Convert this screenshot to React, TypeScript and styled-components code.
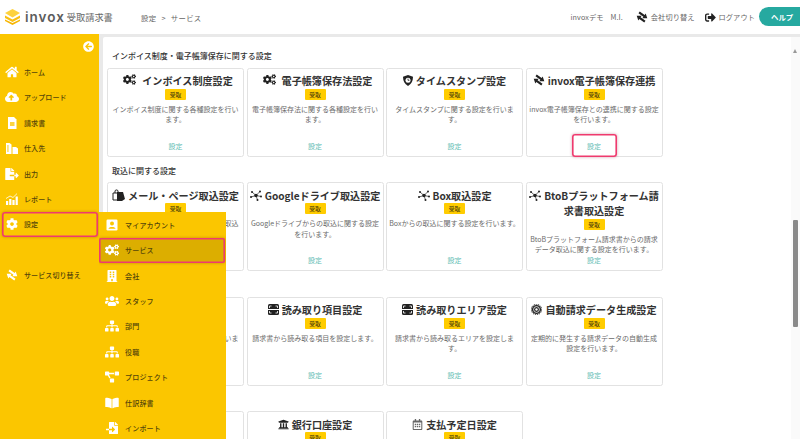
import { FunctionComponent, ReactNode } from 'react';
import styled, { createGlobalStyle } from 'styled-components';
import {
  FaArrowCircleLeft,
  FaBookOpen,
  FaBuilding,
  FaCloudUploadAlt,
  FaCog,
  FaCogs,
  FaFileExport,
  FaFileImport,
  FaHome,
  FaProjectDiagram,
  FaRegCalendarAlt,
  FaSignOutAlt,
  FaSitemap,
  FaUniversity,
  FaUsers,
} from 'react-icons/fa';

const PINK = '#ef3a6e';
const YELLOW = '#fbc600';

const GlobalStyle = createGlobalStyle`
  html, body {
    margin: 0;
    padding: 0;
    background: #fff;
    font-family: "Noto Sans CJK JP", "Noto Sans", sans-serif;
  }
  * {
    box-sizing: border-box;
  }
`;

const Page = styled.div`
  width: 800px;
  height: 439px;
  overflow: hidden;
  display: flex;
  flex-direction: column;
`;

const Header = styled.header`
  height: 34px;
  flex: none;
  display: flex;
  align-items: center;
  background: #fff;
  color: #666;
`;

const Brand = styled.div`
  width: 141px;
  padding-left: 5px;
  display: flex;
  align-items: center;
  gap: 5px;
`;

const BrandName = styled.span`
  font-family: 'Inter', sans-serif;
  font-size: 13.5px;
  font-weight: 600;
  letter-spacing: 1px;
  color: #5c5c5c;
`;

const BrandSub = styled.span`
  font-size: 9.2px;
  font-weight: 400;
  margin-left: -3px;
  color: #666;
`;

const Breadcrumb = styled.div`
  font-size: 7.4px;
  letter-spacing: 0.3px;
  display: flex;
  gap: 5px;
  flex: 1;
`;

const HeaderLink = styled.span<{ $gap?: number }>`
  font-size: 7.2px;
  letter-spacing: 0.1px;
  display: flex;
  align-items: center;
  gap: 3px;
  margin-right: ${(p) => p.$gap ?? 0}px;
  white-space: nowrap;

  svg {
    color: #222;
    font-size: 11px;
  }
`;

const HelpButton = styled.div`
  width: 41px;
  height: 19px;
  margin-top: -1px;
  padding-left: 12px;
  border-radius: 10px 0 0 10px;
  background: #26a9a0;
  color: #fff;
  font-size: 7.4px;
  font-weight: 700;
  line-height: 19px;
`;

const Body = styled.div`
  position: relative;
  flex: 1;
  min-height: 0;
  display: flex;
  background: #e9e9e9;
`;

const Sidebar = styled.nav`
  width: 99px;
  flex: none;
  background: ${YELLOW};
  padding-top: 25.3px;
  position: relative;
`;

const Collapse = styled.div`
  position: absolute;
  top: 7px;
  left: 83px;
  color: #fff;
  font-size: 11px;
  line-height: 0;
`;

const NavItem = styled.div<{ $marked?: boolean; $spaced?: boolean }>`
  height: 25.4px;
  display: flex;
  align-items: center;
  margin: ${(p) => (p.$spaced ? '25.4px 1px 0 2px' : '0 1px 0 2px')};
  padding-left: 3px;
  gap: 5px;
  border-radius: 3px;
  color: #54450a;
  font-size: 7px;
  font-weight: 500;
  letter-spacing: 0.1px;
  box-shadow: ${(p) =>
    p.$marked ? `inset 0 0 0 1.6px ${PINK}, 0 0 3px rgba(120, 60, 0, 0.45)` : 'none'};

  svg {
    color: #fff;
    font-size: 12px;
    width: 14px;
    flex: none;
  }
`;

const Flyout = styled.div`
  position: absolute;
  z-index: 2;
  top: 178.2px;
  left: 99px;
  bottom: 0;
  width: 127px;
  background: ${YELLOW};
  overflow: hidden;
`;

const FlyoutItem = styled.div<{ $marked?: boolean }>`
  height: 25.4px;
  display: flex;
  align-items: center;
  padding-left: 6px;
  gap: 6px;
  margin-right: 1px;
  border-radius: 2px;
  color: #54450a;
  font-size: 7px;
  font-weight: 500;
  letter-spacing: 0.2px;
  background: ${(p) => (p.$marked ? '#dcae00' : 'transparent')};
  box-shadow: ${(p) =>
    p.$marked ? `inset 0 0 0 1.6px ${PINK}, 0 0 3px rgba(120, 60, 0, 0.45)` : 'none'};

  svg {
    color: #fff;
    font-size: 12px;
    width: 14px;
    flex: none;
  }
`;

const Panel = styled.main`
  flex: 1;
  min-width: 0;
  margin: 3px 0 0 4px;
  background: #fff;
  border-radius: 2px 0 0 0;
  display: flex;
  overflow: hidden;
`;

const ScrollArea = styled.div`
  flex: 1;
  min-width: 0;
  padding: 12px 0 0 4px;
  overflow: hidden;
`;

const Section = styled.section`
  margin-bottom: 7px;
`;

const SectionTitle = styled.h2`
  margin: 0 0 4.5px 5px;
  height: 14px;
  line-height: 14px;
  font-size: 8px;
  font-weight: 500;
  color: #333;
`;

const Grid = styled.div`
  display: grid;
  grid-template-columns: repeat(4, 137px);
  grid-auto-rows: 89px;
  column-gap: 2.5px;
`;

const CardBox = styled.article`
  border: 1px solid #e2e2e2;
  border-radius: 2.5px;
  padding: 4.5px 2px 0;
  display: flex;
  flex-direction: column;
  align-items: center;
  text-align: center;
  background: #fff;
`;

const CardTitle = styled.h3`
  flex: none;
  margin: 0;
  min-height: 15.6px;
  font-size: 10.1px;
  line-height: 15.6px;
  font-weight: 700;
  color: #333;

  svg {
    display: inline-block;
    vertical-align: -1px;
    margin-right: 3px;
  }
`;

const Badge = styled.span`
  flex: none;
  width: 21px;
  height: 11px;
  background: #ffcc00;
  color: #54450a;
  font-size: 5.8px;
  font-weight: 500;
  line-height: 11px;
  border-radius: 1px;
`;

const Description = styled.p`
  flex: 0 1 auto;
  min-height: 0;
  margin: 4px 0 0;
  font-size: 7px;
  line-height: 10.4px;
  color: #6b6b6b;
`;

const SettingLink = styled.a<{ $marked?: boolean }>`
  flex: none;
  margin: auto 0 -1px;
  width: 45px;
  height: 23px;
  padding-top: 1px;
  line-height: 23px;
  font-size: 7px;
  color: #5fbdb4;
  border-radius: 3px;
  box-shadow: ${(p) =>
    p.$marked ? `inset 0 0 0 1.6px ${PINK}, 0 0 3px rgba(150, 40, 70, 0.45)` : 'none'};
`;

const ScrollTrack = styled.div`
  width: 9px;
  flex: none;
  background: #fafafa;
  padding-top: 12px;
  position: relative;
`;

const ScrollArrow = styled.div`
  width: 0;
  height: 0;
  margin-left: 2px;
  border-left: 2.5px solid transparent;
  border-right: 2.5px solid transparent;
  border-bottom: 4px solid #999;
`;

const ScrollThumb = styled.div`
  width: 5px;
  height: 107px;
  margin: 167px 0 0 2px;
  background: #8a8a8a;
  border-radius: 1px;
`;

const Logo = () => (
  <svg width="15" height="16" viewBox="0 0 15 16">
    <path d="M0 10.5 7.5 14 15 10.5V12L7.5 16 0 12Z" fill="#f7b500" />
    <path d="M0 6.5 7.5 10.5 15 6.5V9L7.5 13 0 9Z" fill="#f9bf10" />
    <path d="M7.5 0 15 4 7.5 8.5 0 4Z" fill="#fdd23e" />
  </svg>
);

const SwapIcon = ({ color = '#222' }: { color?: string }) => (
  <svg width="12" height="12" viewBox="0 0 12 12" style={{ color }}>
    <g transform="rotate(35 6 6)" fill="currentColor">
      <path d="M1 2.8H7V1L11 3.9 7 6.8V5H1Z" />
      <path d="M11 7H5V5.2L1 8.1 5 11V9.2H11Z" />
    </g>
  </svg>
);

const ShieldIcon = () => (
  <svg width="10" height="11" viewBox="0 0 10 11">
    <path d="M5 0 10 1.8C10 6 8.4 9.2 5 11 1.6 9.2 0 6 0 1.8Z" fill="#222" />
    <circle cx="5" cy="5.2" r="2.5" fill="#fff" />
    <path d="M5 3.6V5.3H6.4" stroke="#222" strokeWidth="0.8" fill="none" />
  </svg>
);

const MailIcon = () => (
  <svg width="13" height="12" viewBox="0 0 13 12">
    <path d="M1 4H9V11H1Z" fill="#fff" stroke="#222" strokeWidth="1" />
    <path d="M3 4V2C3 .6 6 .6 6 2V4" fill="none" stroke="#222" strokeWidth="1" />
    <path d="M5 3H11L13 10 10 12H5Z" fill="#222" />
  </svg>
);

const HubIcon = () => (
  <svg width="12" height="11" viewBox="0 0 12 11">
    <path
      d="M6 5.5 2 2M6 5.5 10 1.5M6 5.5 1 7M6 5.5 11 6.5M6 5.5 7.5 10"
      stroke="#222"
      strokeWidth="0.7"
    />
    <circle cx="6" cy="5.5" r="1.7" fill="#222" />
    <circle cx="2" cy="2" r="1" fill="#222" />
    <circle cx="10" cy="1.5" r="1" fill="#222" />
    <circle cx="1" cy="7" r="1" fill="#222" />
    <circle cx="11" cy="6.5" r="1" fill="#222" />
    <circle cx="7.5" cy="10" r="1" fill="#222" />
  </svg>
);

const ScanIcon = () => (
  <svg width="11" height="11" viewBox="0 0 11 11">
    <rect width="11" height="11" rx="1.5" fill="#222" />
    <path
      d="M1.5 4V2H3.5M7.5 2H9.5V4M1.5 7V9H3.5M7.5 9H9.5V7"
      stroke="#fff"
      strokeWidth="0.8"
      fill="none"
    />
    <rect x="0" y="5" width="11" height="1" fill="#fff" />
  </svg>
);

const RoundGearIcon = () => (
  <svg width="11" height="11" viewBox="0 0 11 11">
    <circle cx="5.5" cy="5.5" r="4.6" fill="#222" />
    <circle cx="5.5" cy="5.5" r="5.2" fill="none" stroke="#222" strokeWidth="1" strokeDasharray="1.2 0.9" />
    <circle cx="5.5" cy="5.5" r="2.9" fill="none" stroke="#fff" strokeWidth="0.8" />
    <circle cx="5.5" cy="5.5" r="1.2" fill="#fff" />
  </svg>
);

const AccountIcon = () => (
  <svg width="12" height="12" viewBox="0 0 12 12">
    <rect width="11" height="11" x="0.5" y="0.5" rx="1.2" fill="#fff" />
    <circle cx="6" cy="4.4" r="2" fill={YELLOW} />
    <path d="M2.5 9.8C2.5 7.4 9.5 7.4 9.5 9.8Z" fill={YELLOW} />
  </svg>
);

const InvoiceIcon = () => (
  <svg width="12" height="12" viewBox="0 0 12 12">
    <path d="M2 0H8L10.5 2.5V12H2Z" fill="#fff" />
    <rect x="4" y="5" width="4.5" height="4" fill={YELLOW} opacity="0.75" />
  </svg>
);

const SupplierIcon = () => (
  <svg width="12" height="11" viewBox="0 0 12 11">
    <path d="M0 0H3.5L5.5 1.5V11H0Z" fill="#fff" />
    <rect x="1.5" y="2" width="0.9" height="7" fill={YELLOW} />
    <path d="M6.5 4H10L12 5.5V11H6.5Z" fill="#fff" />
  </svg>
);

const ReportIcon = () => (
  <svg width="12" height="12" viewBox="0 0 12 12">
    <rect x="0" y="8" width="2.2" height="4" fill="#fff" />
    <rect x="3.2" y="6" width="2.2" height="6" fill="#fff" />
    <rect x="6.4" y="7" width="2.2" height="5" fill="#fff" />
    <rect x="9.6" y="3.5" width="2.2" height="8.5" fill="#fff" />
    <path d="M0 5.5 4 3 7 4.5 11 .6" fill="none" stroke="#fff" strokeWidth="0.8" />
  </svg>
);

interface ICardProps {
  icon?: ReactNode;
  title?: string;
  description?: string;
  marked?: boolean;
}

const Card: FunctionComponent<ICardProps> = (props): JSX.Element => {
  return (
    <CardBox>
      <CardTitle>
        {props.icon}
        {props.title}
      </CardTitle>
      <Badge>受取</Badge>
      <Description>{props.description}</Description>
      <SettingLink $marked={props.marked}>設定</SettingLink>
    </CardBox>
  );
};

const App: FunctionComponent = (): JSX.Element => {
  const cogs = <FaCogs size={13} color="#222" style={{ marginLeft: 5, marginRight: 6 }} />;

  return (
    <Page>
      <GlobalStyle />
      <Header>
        <Brand>
          <Logo />
          <BrandName>invox</BrandName>
          <BrandSub>受取請求書</BrandSub>
        </Brand>
        <Breadcrumb>
          <span>設定</span>
          <span>&gt;</span>
          <span>サービス</span>
        </Breadcrumb>
        <HeaderLink $gap={7}>invoxデモ</HeaderLink>
        <HeaderLink $gap={13}>M.I.</HeaderLink>
        <HeaderLink $gap={10}>
          <SwapIcon />
          会社切り替え
        </HeaderLink>
        <HeaderLink $gap={4}>
          <FaSignOutAlt />
          ログアウト
        </HeaderLink>
        <HelpButton>ヘルプ</HelpButton>
      </Header>
      <Body>
        <Sidebar>
          <Collapse>
            <FaArrowCircleLeft />
          </Collapse>
          <NavItem>
            <FaHome />
            ホーム
          </NavItem>
          <NavItem>
            <FaCloudUploadAlt />
            アップロード
          </NavItem>
          <NavItem>
            <InvoiceIcon />
            請求書
          </NavItem>
          <NavItem>
            <SupplierIcon />
            仕入先
          </NavItem>
          <NavItem>
            <FaFileExport />
            出力
          </NavItem>
          <NavItem>
            <ReportIcon />
            レポート
          </NavItem>
          <NavItem $marked>
            <FaCog />
            設定
          </NavItem>
          <NavItem $spaced>
            <SwapIcon color="#fff" />
            サービス切り替え
          </NavItem>
        </Sidebar>
        <Flyout>
          <FlyoutItem>
            <AccountIcon />
            マイアカウント
          </FlyoutItem>
          <FlyoutItem $marked>
            <FaCogs />
            サービス
          </FlyoutItem>
          <FlyoutItem>
            <FaBuilding />
            会社
          </FlyoutItem>
          <FlyoutItem>
            <FaUsers />
            スタッフ
          </FlyoutItem>
          <FlyoutItem>
            <FaSitemap />
            部門
          </FlyoutItem>
          <FlyoutItem>
            <FaSitemap />
            役職
          </FlyoutItem>
          <FlyoutItem>
            <FaProjectDiagram />
            プロジェクト
          </FlyoutItem>
          <FlyoutItem>
            <FaBookOpen />
            仕訳辞書
          </FlyoutItem>
          <FlyoutItem>
            <FaFileImport />
            インポート
          </FlyoutItem>
        </Flyout>
        <Panel>
          <ScrollArea>
            <Section>
              <SectionTitle>インボイス制度・電子帳簿保存に関する設定</SectionTitle>
              <Grid>
                <Card
                  icon={cogs}
                  title="インボイス制度設定"
                  description="インボイス制度に関する各種設定を行います。"
                />
                <Card
                  icon={cogs}
                  title="電子帳簿保存法設定"
                  description="電子帳簿保存法に関する各種設定を行います。"
                />
                <Card
                  icon={<ShieldIcon />}
                  title="タイムスタンプ設定"
                  description="タイムスタンプに関する設定を行います。"
                />
                <Card
                  icon={<SwapIcon />}
                  title="invox電子帳簿保存連携"
                  description="invox電子帳簿保存との連携に関する設定を行います。"
                  marked
                />
              </Grid>
            </Section>
            <Section>
              <SectionTitle>取込に関する設定</SectionTitle>
              <Grid>
                <Card
                  icon={<MailIcon />}
                  title="メール・ページ取込設定"
                  description="メール・ページからの請求書データ取込に関する設定を行います。"
                />
                <Card
                  icon={<HubIcon />}
                  title="Googleドライブ取込設定"
                  description="Googleドライブからの取込に関する設定を行います。"
                />
                <Card
                  icon={<HubIcon />}
                  title="Box取込設定"
                  description="Boxからの取込に関する設定を行います。"
                />
                <Card
                  icon={<HubIcon />}
                  title="BtoBプラットフォーム請求書取込設定"
                  description="BtoBプラットフォーム請求書からの請求データ取込に関する設定を行います。"
                />
              </Grid>
            </Section>
            <Section>
              <SectionTitle />
              <Grid>
                <Card description="読み取り処理に関する各種設定を行います。" />
                <Card
                  icon={<ScanIcon />}
                  title="読み取り項目設定"
                  description="請求書から読み取る項目を設定します。"
                />
                <Card
                  icon={<ScanIcon />}
                  title="読み取りエリア設定"
                  description="請求書から読み取るエリアを設定します。"
                />
                <Card
                  icon={<RoundGearIcon />}
                  title="自動請求データ生成設定"
                  description="定期的に発生する請求データの自動生成設定を行います。"
                />
              </Grid>
            </Section>
            <Section>
              <SectionTitle />
              <Grid>
                <Card />
                <Card icon={<FaUniversity size={11} color="#222" />} title="銀行口座設定" />
                <Card icon={<FaRegCalendarAlt size={11} color="#666" />} title="支払予定日設定" />
              </Grid>
            </Section>
          </ScrollArea>
          <ScrollTrack>
            <ScrollArrow />
            <ScrollThumb />
          </ScrollTrack>
        </Panel>
      </Body>
    </Page>
  );
};

export default App;
